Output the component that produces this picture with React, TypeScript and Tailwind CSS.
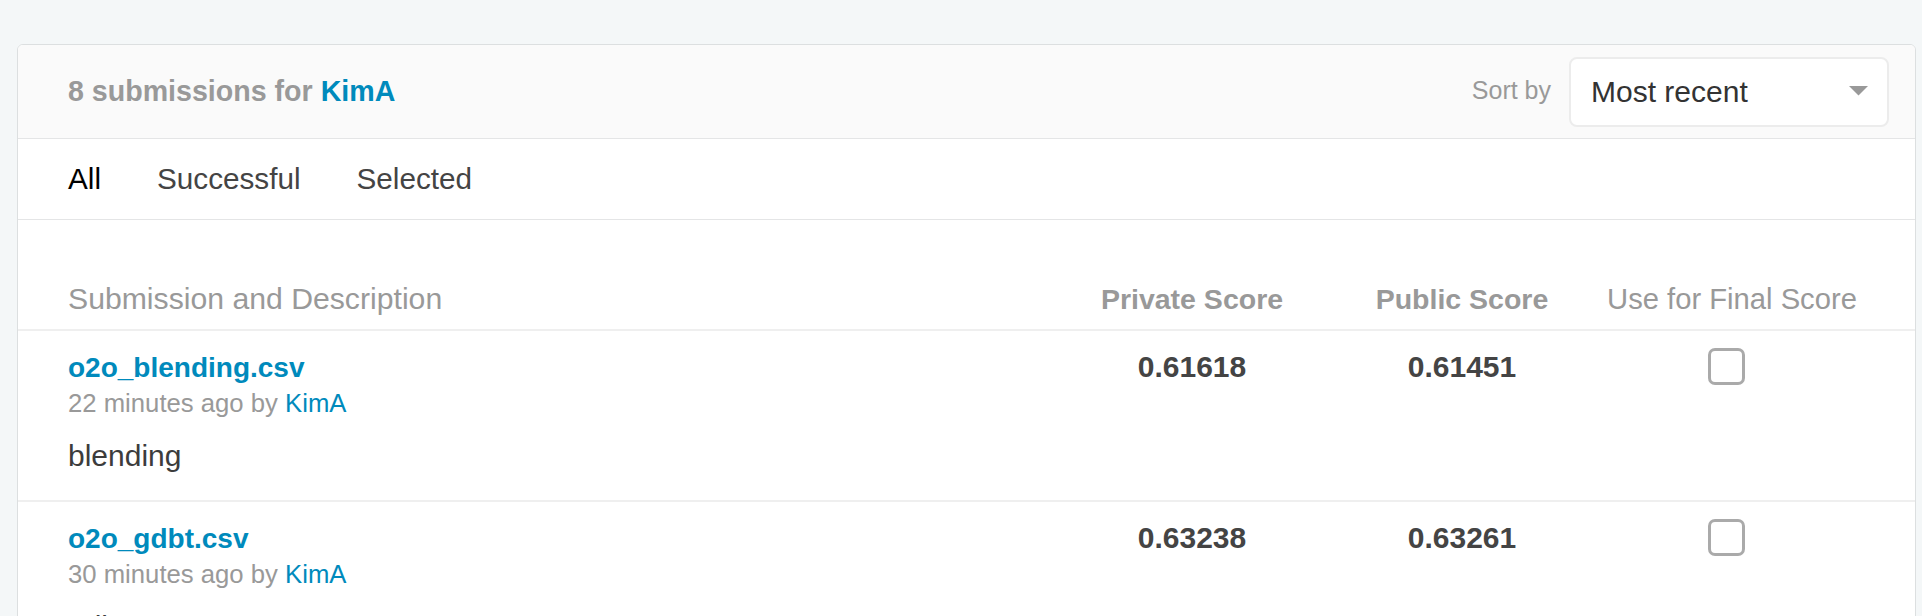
import { ChangeEvent } from 'react'

const FONT = "font-['Liberation_Sans',Arial,sans-serif]"

const SUBMISSIONS = [
  {
    file: 'o2o_blending.csv',
    when: '22 minutes ago',
    user: 'KimA',
    note: 'blending',
    priv: '0.61618',
    pub: '0.61451',
  },
  {
    file: 'o2o_gdbt.csv',
    when: '30 minutes ago',
    user: 'KimA',
    note: 'gdbt',
    priv: '0.63238',
    pub: '0.63261',
  },
]

const TABS = ['All', 'Successful', 'Selected']

function SortSelect() {
  return (
    <div className="flex items-center gap-[18px]">
      <span className="text-[25px] leading-none text-[#999] pb-[3px]">Sort by</span>
      <div className="relative w-[320px] h-[70px] rounded-[8px] border-2 border-[#ececec] bg-white">
        <select
          defaultValue="recent"
          onChange={(e: ChangeEvent<HTMLSelectElement>) => e.preventDefault()}
          className="appearance-none w-full h-full bg-transparent pl-[20px] pr-[50px] text-[30px] leading-none text-[#333] outline-none"
        >
          <option value="recent">Most recent</option>
          <option value="score">Best score</option>
        </select>
        <svg
          className="pointer-events-none absolute right-[19px] top-[27px]"
          width="19"
          height="10"
          viewBox="0 0 19 10"
        >
          <path d="M0 0 H19 L9.5 9.5 Z" fill="#999" />
        </svg>
      </div>
    </div>
  )
}

export default function App() {
  return (
    <div className={`${FONT} min-h-[616px] bg-[#f4f7f8] pl-[17px] pt-[44px]`}>
      <div className="w-[1899px] rounded-t-[6px] border border-[#dcdfe0] bg-white overflow-hidden">
        {/* header */}
        <div className="h-[94px] flex items-center justify-between bg-[#fafafa] border-b border-[#e4e5e6] pl-[50px] pr-[26px]">
          <p className="text-[28.6px] leading-none font-bold text-[#999]">
            8 submissions for <span className="text-[#008abc]">KimA</span>
          </p>
          <SortSelect />
        </div>

        {/* tabs */}
        <div className="h-[81px] flex items-center gap-[56px] border-b border-[#e4e5e6] pl-[50px]">
          {TABS.map((t, i) => (
            <span
              key={t}
              className={`text-[29.7px] leading-none ${i === 0 ? 'text-black' : 'text-[#444]'}`}
            >
              {t}
            </span>
          ))}
        </div>

        {/* table head */}
        <div className="h-[111px] flex flex-col justify-end border-b-2 border-[#efefef] pl-[50px] pr-[48px] pb-[15px]">
          <div className="grid grid-cols-[1fr_270px_270px_270px] items-baseline text-[#999] leading-none">
            <span className="text-[30.2px]">Submission and Description</span>
            <span className="text-[28.5px] font-bold text-center">Private Score</span>
            <span className="text-[28.5px] font-bold text-center">Public Score</span>
            <span className="text-[29.2px] text-center">Use for Final Score</span>
          </div>
        </div>

        {/* rows */}
        {SUBMISSIONS.map((s) => (
          <div
            key={s.file}
            className="h-[171px] grid grid-cols-[1fr_270px_270px_270px] items-start border-b-2 border-[#efefef] pl-[50px] pr-[48px] pt-[17px]"
          >
            <div className="mt-[6px] leading-none">
              <p className="text-[28px] font-bold text-[#008abc]">{s.file}</p>
              <p className="mt-[9px] text-[25.7px] text-[#999]">
                {s.when} by <span className="text-[#008abc]">{s.user}</span>
              </p>
              <p className="mt-[24px] text-[30px] text-[#3c3c3c]">{s.note}</p>
            </div>
            <p className="mt-[4px] text-center text-[30px] leading-none font-bold text-[#444]">{s.priv}</p>
            <p className="mt-[4px] text-center text-[30px] leading-none font-bold text-[#444]">{s.pub}</p>
            <div className="flex justify-center pr-[11px]">
              <span className="block w-[37px] h-[37px] rounded-[7px] border-[3px] border-[#aaa] bg-white" />
            </div>
          </div>
        ))}
      </div>
    </div>
  )
}
